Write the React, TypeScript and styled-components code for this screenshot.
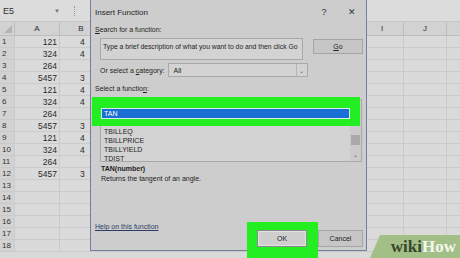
import React from 'react'
import styled, { createGlobalStyle } from 'styled-components'

const GlobalStyle = createGlobalStyle`
  html, body { margin: 0; padding: 0; }
  body {
    width: 460px;
    height: 258px;
    overflow: hidden;
    background: #d9d9d9;
    font-family: "Liberation Sans", Arial, sans-serif;
    color: #222;
  }
`

const Page = styled.div`
  position: relative;
  width: 460px;
  height: 258px;
  overflow: hidden;
`

// ---------- spreadsheet ----------

const Sheet = styled.div`
  display: flex;
  flex-direction: column;
`

const FormulaBar = styled.div`
  display: flex;
  align-items: center;
  height: 21px;
  border-bottom: 1px solid #c6c6c6;
  background: #dcdcdc;
`

const NameBox = styled.div`
  display: flex;
  align-items: center;
  justify-content: space-between;
  width: 64px;
  height: 18px;
  padding: 0 4px 0 3px;
  box-sizing: border-box;
  font-size: 9px;
  color: #333;
`

const Caret = styled.span`
  font-size: 6px;
  color: #777;
`

const Grip = styled.span`
  margin-left: 10px;
  width: 2px;
  height: 10px;
  border-left: 1px dotted #999;
`

const SheetRow = styled.div<{ $header?: boolean }>`
  display: flex;
  height: ${p => (p.$header ? 14 : 12)}px;
  background: ${p => (p.$header ? '#d2d2d2' : '#dadada')};
`

const Cell = styled.div<{ $w: number; $head?: boolean; $align?: string }>`
  width: ${p => p.$w}px;
  flex: none;
  box-sizing: border-box;
  border-right: 1px solid ${p => (p.$head ? '#bdbdbd' : '#cacaca')};
  border-bottom: 1px solid ${p => (p.$head ? '#bdbdbd' : '#cacaca')};
  display: flex;
  align-items: center;
  justify-content: ${p => p.$align || 'flex-end'};
  padding: 0 2px;
  font-size: ${p => (p.$head ? 8 : 8.5)}px;
  color: #2a2a2a;
  white-space: nowrap;
  overflow: hidden;
`

// column B is mostly under the dialog: only its first digit shows
const PeekCell = styled(Cell)`
  justify-content: flex-start;
  padding-left: 20px;
`

const RowNum = styled(Cell)`
  justify-content: flex-start;
  background: #d2d2d2;
  font-size: 8px;
  color: #333;
`

const Corner = styled.div`
  width: 15px;
  flex: none;
  box-sizing: border-box;
  border-right: 1px solid #bdbdbd;
  border-bottom: 1px solid #bdbdbd;
  position: relative;
  &::after {
    content: '';
    position: absolute;
    right: 2px;
    bottom: 2px;
    border-left: 8px solid transparent;
    border-bottom: 8px solid #b4b4b4;
  }
`

// ---------- dialog ----------

const Dialog = styled.div`
  position: absolute;
  left: 90px;
  top: 0;
  width: 277px;
  height: 251px;
  box-sizing: border-box;
  border: 1px solid #71819a;
  border-top: none;
  background: #cdcdcd;
  display: flex;
  flex-direction: column;
  font-size: 7px;
  color: #1e1e1e;
`

const TitleBar = styled.div`
  display: flex;
  align-items: center;
  height: 24px;
  padding: 0 4px;
  font-size: 8px;
`

const Title = styled.span`
  flex: 1;
`

const TitleBtn = styled.span<{ $w: number }>`
  width: ${p => p.$w}px;
  text-align: center;
  font-size: 9px;
  color: #333;
`

const Body = styled.div`
  flex: 1;
  display: flex;
  flex-direction: column;
  padding: 0 3px 0 4px;
`

const Label = styled.div<{ $mt?: number }>`
  height: 12px;
  line-height: 12px;
  margin-top: ${p => p.$mt || 0}px;
  white-space: nowrap;
`

const SearchRow = styled.div`
  display: flex;
  align-items: flex-start;
  margin-top: 2px;
  margin-left: 5px;
`

const SearchBox = styled.div`
  width: 203px;
  height: 22px;
  box-sizing: border-box;
  border: 1px solid #a9a9a9;
  background: #d3d3d3;
  padding: 4px 2px;
  font-size: 6.8px;
  white-space: nowrap;
  overflow: hidden;
`

const Button = styled.div<{ $w: number }>`
  width: ${p => p.$w}px;
  height: 17px;
  box-sizing: border-box;
  border: 1px solid #a5a5a5;
  background: #c6c6c6;
  display: flex;
  align-items: center;
  justify-content: center;
  color: #222;
`

const GoButton = styled(Button)`
  height: 15px;
  margin: 1px 0 0 10px;
`

const OkButton = styled(Button)`
  position: relative;
  z-index: 2;
  background: #cfcfcf;
  border-color: #8a8a8a;
  box-shadow: inset 0 0 0 1px #e2e2e2;
`

const CategoryRow = styled.div`
  display: flex;
  align-items: center;
  height: 14px;
  margin: 3px 0 0 5px;
  gap: 3px;
`

const Select = styled.div`
  display: flex;
  align-items: center;
  width: 140px;
  height: 14px;
  box-sizing: border-box;
  border: 1px solid #a9a9a9;
  background: #d3d3d3;
`

const SelectValue = styled.span`
  flex: 1;
  padding-left: 5px;
`

const SelectArrow = styled.span`
  width: 10px;
  height: 100%;
  border-left: 1px solid #b5b5b5;
  display: flex;
  align-items: center;
  justify-content: center;
  font-size: 6px;
  color: #555;
`

const ListBox = styled.div`
  display: flex;
  margin: 4px 0 0 5px;
  width: 262px;
  height: 63px;
  box-sizing: border-box;
  border: 1px solid #a9a9a9;
  background: #d3d3d3;
`

const ListItems = styled.div`
  flex: 1;
  display: flex;
  flex-direction: column;
  padding: 0 1px;
`

const ListItem = styled.div<{ $selected?: boolean }>`
  height: 9px;
  line-height: 9px;
  padding-left: 2px;
  position: relative;
  z-index: ${p => (p.$selected ? 2 : 'auto')};
  background: ${p => (p.$selected ? '#1a6fd4' : 'transparent')};
  color: ${p => (p.$selected ? '#fff' : '#1e1e1e')};
  box-shadow: ${p => (p.$selected ? '0 0 0 1px #dce6f0' : 'none')};
`

const ScrollBar = styled.div`
  width: 11px;
  display: flex;
  flex-direction: column;
  justify-content: flex-end;
  align-items: center;
  background: #cbcbcb;
`

const Thumb = styled.div`
  width: 9px;
  height: 10px;
  background: #a9a9a9;
  margin-bottom: 6px;
`

const ScrollArrow = styled.div`
  height: 10px;
  font-size: 6px;
  color: #555;
`

const Syntax = styled.div`
  margin: 2px 0 0 6px;
  line-height: 10px;
  font-weight: bold;
`

const Description = styled.div`
  margin-left: 6px;
  line-height: 9px;
`

const Footer = styled.div`
  margin-top: auto;
  height: 28px;
  display: flex;
  align-items: flex-start;
`

const HelpLink = styled.span`
  flex: 1;
  line-height: 10px;
  text-decoration: underline;
  color: #2b3d66;
`

const Buttons = styled.div`
  display: flex;
  gap: 11px;
  margin-top: 8px;
`

// ---------- overlays ----------

const Highlight = styled.div`
  position: absolute;
  z-index: 1;
  background: #22ee22;
`

const ListHighlight = styled(Highlight)`
  left: 92px;
  top: 97px;
  width: 268px;
  height: 29px;
`

const OkHighlight = styled(Highlight)`
  left: 247px;
  top: 222px;
  width: 71px;
  height: 36px;
`

const Watermark = styled.div`
  position: absolute;
  z-index: 3;
  right: 0;
  bottom: 0;
  width: 90px;
  height: 23px;
  background: #a3bf88;
  clip-path: polygon(10px 0, 100% 0, 100% 100%, 0 100%);
  display: flex;
  align-items: center;
  justify-content: flex-end;
  padding-right: 4px;
  box-sizing: border-box;
  font-family: "Liberation Serif", "DejaVu Serif", serif;
  font-weight: bold;
  font-size: 17px;
`

const Wiki = styled.span`
  color: #38472b;
`

const How = styled.span`
  color: #f3f6ee;
`

const columns = ['A', 'B', 'C', 'D', 'E', 'F', 'G', 'H', 'I', 'J', 'K']
const visibleHeads = ['A', 'B', 'I', 'J']
const colWidth = (i: number) => (i === 0 ? 45 : 43)

const colA = [121, 324, 264, 5457, 121, 324, 264, 5457, 121, 324, 264, 5457]
const colBPeek = ['4', '4', '', '3', '4', '4', '', '3', '4', '4', '', '3']

const functions = ['T', 'TAN', 'TANH', 'TBILLEQ', 'TBILLPRICE', 'TBILLYIELD', 'TDIST']

export default function App() {
  const rows = Array.from({ length: 18 }, (_, i) => i + 1)

  return (
    <Page>
      <GlobalStyle />
      <Sheet>
        <FormulaBar>
          <NameBox>
            E5 <Caret>▼</Caret>
          </NameBox>
          <Grip />
        </FormulaBar>
        <SheetRow $header>
          <Corner />
          {columns.map((c, i) => (
            <Cell key={c} $w={colWidth(i)} $head $align="center">
              {visibleHeads.includes(c) ? c : ''}
            </Cell>
          ))}
        </SheetRow>
        {rows.map(r => (
          <SheetRow key={r}>
            <RowNum $w={15}>{r}</RowNum>
            {columns.map((c, i) =>
              i === 1 ? (
                <PeekCell key={c} $w={colWidth(i)}>
                  {colBPeek[r - 1] || ''}
                </PeekCell>
              ) : (
                <Cell key={c} $w={colWidth(i)}>
                  {i === 0 && colA[r - 1] !== undefined ? colA[r - 1] : ''}
                </Cell>
              )
            )}
          </SheetRow>
        ))}
      </Sheet>

      <Dialog>
        <TitleBar>
          <Title>Insert Function</Title>
          <TitleBtn $w={20}>?</TitleBtn>
          <TitleBtn $w={8} />
          <TitleBtn $w={20}>✕</TitleBtn>
        </TitleBar>
        <Body>
          <Label>
            <u>S</u>earch for a function:
          </Label>
          <SearchRow>
            <SearchBox>Type a brief description of what you want to do and then click Go</SearchBox>
            <GoButton $w={50}>
              <u>G</u>o
            </GoButton>
          </SearchRow>
          <CategoryRow>
            <span>
              Or select a <u>c</u>ategory:
            </span>
            <Select>
              <SelectValue>All</SelectValue>
              <SelectArrow>⌄</SelectArrow>
            </Select>
          </CategoryRow>
          <Label $mt={6}>
            Select a functio<u>n</u>:
          </Label>
          <ListBox>
            <ListItems>
              {functions.map(f => (
                <ListItem key={f} $selected={f === 'TAN'}>
                  {f}
                </ListItem>
              ))}
            </ListItems>
            <ScrollBar>
              <Thumb />
              <ScrollArrow>⌄</ScrollArrow>
            </ScrollBar>
          </ListBox>
          <Syntax>TAN(number)</Syntax>
          <Description>Returns the tangent of an angle.</Description>
          <Footer>
            <HelpLink>Help on this function</HelpLink>
            <Buttons>
              <OkButton $w={50}>OK</OkButton>
              <Button $w={45}>Cancel</Button>
            </Buttons>
          </Footer>
        </Body>
      </Dialog>

      <ListHighlight />
      <OkHighlight />

      <Watermark>
        <Wiki>wiki</Wiki>
        <How>How</How>
      </Watermark>
    </Page>
  )
}
